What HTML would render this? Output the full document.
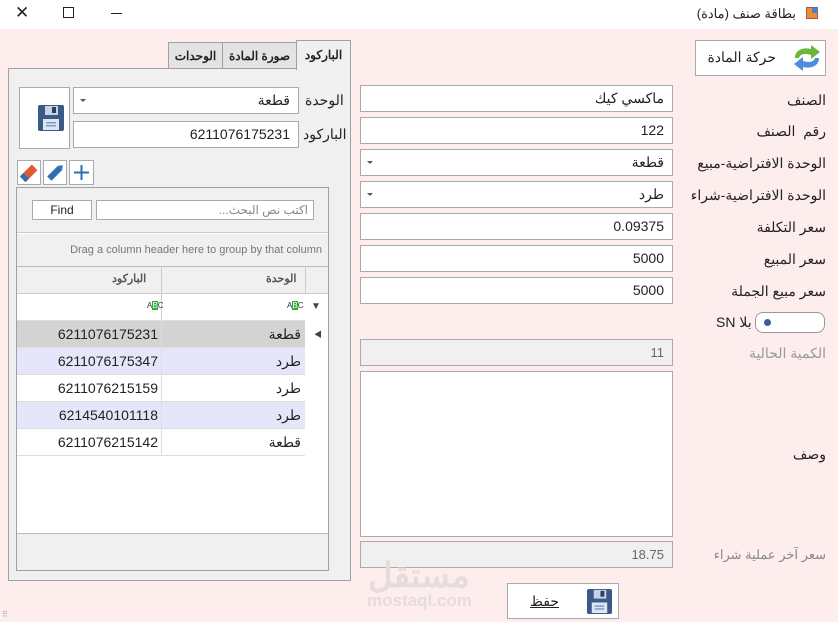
<!DOCTYPE html>
<html><head><meta charset="utf-8"><style>
*{box-sizing:border-box;margin:0;padding:0}
body{width:838px;height:622px;overflow:hidden;background:#fdeeed;font-family:"Liberation Sans","Noto Sans CJK SC",sans-serif;font-size:13px;color:#222;position:relative}
.a{position:absolute}
.inp{position:absolute;background:#fff;border:1px solid #aaa;text-align:right;padding-right:8px;font-size:14px;line-height:25px;height:27px;direction:ltr}
.lbl{position:absolute;right:12px;font-size:14px;text-align:right;white-space:nowrap;direction:rtl}
.dd{position:absolute;left:6px;top:11px;width:0;height:0;border-left:3px solid transparent;border-right:3px solid transparent;border-top:3px solid #555}
.row{position:absolute;left:17px;width:288px;height:27px;border-bottom:1px solid #ddd}
.row div{position:absolute;top:0;height:27px;line-height:27px;font-size:14px}
.c1{left:0;width:145px;text-align:right;padding-right:3px;border-right:1px solid #ddd}
.c2{left:145px;width:143px;text-align:right;padding-right:4px}
.btn{position:absolute;background:#fff;border:1px solid #aaa}
</style></head><body>
<div class="a" style="left:0;top:0;width:838px;height:29px;background:#fff"></div>
<div class="a" style="left:15px;top:3px;font-size:17px;color:#222">✕</div>
<div class="a" style="left:63px;top:7px;width:11px;height:11px;border:1px solid #222"></div>
<div class="a" style="left:111px;top:13px;width:11px;height:1px;background:#222"></div>
<div class="a" style="right:42px;top:6px;font-size:13px;direction:rtl">بطاقة صنف (مادة)</div>
<div class="a" style="left:806px;top:7px;width:12px;height:12px;background:#e89030;border:1px solid #a55"><div class="a" style="left:5px;top:0;width:6px;height:5px;background:#4a7fd0"></div></div>

<div class="a" style="left:8px;top:68px;width:343px;height:513px;background:#f0f0f0;border:1px solid #a0a0a0"></div>
<div class="a" style="left:168px;top:42px;width:55px;height:27px;background:#e3e3e3;border:1px solid #a0a0a0;text-align:center;line-height:26px;font-weight:bold;font-size:12px">الوحدات</div>
<div class="a" style="left:222px;top:42px;width:75px;height:27px;background:#e3e3e3;border:1px solid #a0a0a0;text-align:center;line-height:26px;font-weight:bold;font-size:12px">صورة المادة</div>
<div class="a" style="left:296px;top:40px;width:55px;height:30px;background:#f0f0f0;border:1px solid #a0a0a0;border-bottom:none;text-align:center;line-height:28px;font-weight:bold;font-size:12px">الباركود</div>

<div class="btn" style="left:19px;top:87px;width:51px;height:62px;border-color:#aaa"></div>
<svg class="a" style="left:37px;top:104px" width="28" height="28" viewBox="0 0 28 28"><rect x="1" y="1" width="26" height="26" rx="2" fill="#3b5a88"/><rect x="8" y="2" width="13" height="9" fill="#c8d4e4"/><rect x="15" y="3" width="4" height="6" fill="#2a3f66"/><rect x="6" y="15" width="16" height="11" fill="#dde6f2"/><rect x="9" y="18" width="10" height="1.5" fill="#7a9ac0"/><rect x="9" y="21" width="10" height="1.5" fill="#7a9ac0"/></svg>
<div class="inp" style="left:73px;top:87px;width:226px">قطعة<div class="dd"></div></div>
<div class="inp" style="left:73px;top:121px;width:226px">6211076175231</div>
<div class="a" style="left:305px;top:92px;font-size:14px">الوحدة</div>
<div class="a" style="left:303px;top:126px;font-size:14px">الباركود</div>

<div class="btn" style="left:17px;top:160px;width:24px;height:25px"><svg width="22" height="23"><g transform="rotate(-45 11 12)"><rect x="4" y="8" width="15" height="8" rx="1" fill="#e05a38"/><rect x="2" y="8" width="5" height="8" fill="#2f6db5"/></g></svg></div>
<div class="btn" style="left:43px;top:160px;width:24px;height:25px"><svg width="22" height="23"><g transform="rotate(-45 11 12)"><rect x="3" y="9" width="15" height="6" fill="#2f6db5"/><path d="M18 9 L22 12 L18 15Z" fill="#2f6db5"/></g></svg></div>
<div class="btn" style="left:69px;top:160px;width:25px;height:25px"><svg width="23" height="23"><path d="M11.5 4V19M4 11.5H19" stroke="#2f6db5" stroke-width="2"/></svg></div>

<div class="a" style="left:16px;top:187px;width:313px;height:384px;background:#fff;border:1px solid #a0a0a0"></div>
<div class="a" style="left:17px;top:188px;width:311px;height:45px;background:#f0f0f0;border-bottom:1px solid #ccc"></div>
<div class="btn" style="left:32px;top:200px;width:60px;height:20px;text-align:center;line-height:18px;font-size:12px">Find</div>
<div class="btn" style="left:96px;top:200px;width:218px;height:20px;text-align:right;padding-right:5px;line-height:18px;font-size:12px;color:#888;direction:rtl">اكتب نص البحث...</div>
<div class="a" style="left:17px;top:234px;width:311px;height:32px;background:#f0f0f0;text-align:right;padding-right:6px;line-height:32px;font-size:11px;color:#777">Drag a column header here to group by that column</div>
<div class="a" style="left:17px;top:266px;width:311px;height:28px;background:#f0f0f0;border-top:1px solid #bbb;border-bottom:1px solid #ccc"></div>
<div class="a" style="left:161px;top:266px;width:1px;height:189px;background:#ccc"></div>
<div class="a" style="left:305px;top:266px;width:1px;height:28px;background:#ccc"></div>
<div class="a" style="left:112px;top:272px;font-size:11px;color:#555;font-weight:bold">الباركود</div>
<div class="a" style="left:266px;top:272px;font-size:11px;color:#555;font-weight:bold">الوحدة</div>
<div class="a" style="left:147px;top:301px;font-size:8px;color:#333">A<span style="background:#3a3;color:#fff">B</span>C</div>
<div class="a" style="left:287px;top:301px;font-size:8px;color:#333">A<span style="background:#3a3;color:#fff">B</span>C</div>
<div class="a" style="left:311px;top:301px;font-size:10px;color:#444">▼</div>
<div class="a" style="left:17px;top:293px;width:288px;height:1px;background:#ccc"></div>
<div class="a" style="left:17px;top:320px;width:288px;height:1px;background:#ddd"></div>
<div class="row" style="top:321px;background:#d3d3d3"><div class="c1">6211076175231</div><div class="c2">قطعة</div></div>
<div class="a" style="left:314px;top:329px;font-size:8px;color:#444">◀</div>
<div class="row" style="top:348px;background:#e6e6fa"><div class="c1">6211076175347</div><div class="c2">طرد</div></div>
<div class="row" style="top:375px;background:#fff"><div class="c1">6211076215159</div><div class="c2">طرد</div></div>
<div class="row" style="top:402px;background:#e6e6fa"><div class="c1">6214540101118</div><div class="c2">طرد</div></div>
<div class="row" style="top:429px;background:#fff"><div class="c1">6211076215142</div><div class="c2">قطعة</div></div>
<div class="a" style="left:17px;top:533px;width:311px;height:37px;background:#f0f0f0;border-top:1px solid #bbb"></div>

<div class="btn" style="left:695px;top:40px;width:131px;height:36px"></div>
<div class="a" style="right:62px;top:49px;font-size:14px;direction:rtl">حركة المادة</div>
<svg class="a" style="left:791px;top:43px" width="32" height="30" viewBox="0 0 32 30"><path d="M4 15 C4 7 12 4 20 6 L20 2 L29 9 L20 16 L20 12 C14 10 9 11 8 15Z" fill="#6ab83a"/><path d="M28 15 C28 23 20 26 12 24 L12 28 L3 21 L12 14 L12 18 C18 20 23 19 24 15Z" fill="#4a8fd8"/></svg>

<div class="inp" style="left:360px;top:85px;width:313px">ماكسي كيك</div>
<div class="inp" style="left:360px;top:117px;width:313px">122</div>
<div class="inp" style="left:360px;top:149px;width:313px">قطعة<div class="dd"></div></div>
<div class="inp" style="left:360px;top:181px;width:313px">طرد<div class="dd"></div></div>
<div class="inp" style="left:360px;top:213px;width:313px">0.09375</div>
<div class="inp" style="left:360px;top:245px;width:313px">5000</div>
<div class="inp" style="left:360px;top:277px;width:313px">5000</div>
<div class="lbl" style="top:92px">الصنف</div>
<div class="lbl" style="top:123px">رقم &nbsp;الصنف</div>
<div class="lbl" style="top:155px">الوحدة الافتراضية-مبيع</div>
<div class="lbl" style="top:187px">الوحدة الافتراضية-شراء</div>
<div class="lbl" style="top:219px">سعر التكلفة</div>
<div class="lbl" style="top:251px">سعر المبيع</div>
<div class="lbl" style="top:283px">سعر مبيع الجملة</div>

<div class="a" style="left:755px;top:312px;width:70px;height:21px;background:#fff;border:1px solid #999;border-radius:8px"><div class="a" style="left:8px;top:6px;width:7px;height:7px;border-radius:50%;background:#3b5a99"></div></div>
<div class="a" style="left:716px;top:314px;font-size:14px">SN <span>بلا</span></div>

<div class="inp" style="left:360px;top:339px;width:313px;background:#f0f0f0;color:#666;font-size:13px">11</div>
<div class="lbl" style="top:345px;color:#999">الكمية الحالية</div>
<div class="inp" style="left:360px;top:371px;width:313px;height:166px"></div>
<div class="lbl" style="top:446px">وصف</div>
<div class="inp" style="left:360px;top:541px;width:313px;background:#f0f0f0;color:#666;font-size:13px">18.75</div>
<div class="lbl" style="top:547px;color:#888;font-size:13px">سعر آخر عملية شراء</div>

<div class="a" style="left:368px;top:556px;font-size:34px;font-weight:bold;color:#e6dcdb;direction:rtl">مستقل</div>
<div class="a" style="left:367px;top:591px;font-size:17px;font-weight:bold;color:#e6dcdb">mostaql.com</div>

<div class="btn" style="left:507px;top:583px;width:112px;height:36px"></div>
<div class="a" style="left:530px;top:593px;font-size:14px;text-decoration:underline">حفظ</div>
<svg class="a" style="left:586px;top:588px" width="27" height="27" viewBox="0 0 28 28"><rect x="1" y="1" width="26" height="26" rx="2" fill="#3b5a88"/><rect x="8" y="2" width="13" height="9" fill="#c8d4e4"/><rect x="15" y="3" width="4" height="6" fill="#2a3f66"/><rect x="6" y="15" width="16" height="11" fill="#dde6f2"/><rect x="9" y="18" width="10" height="1.5" fill="#7a9ac0"/><rect x="9" y="21" width="10" height="1.5" fill="#7a9ac0"/></svg>
<div class="a" style="left:2px;top:610px;font-size:8px;color:#999">⠿</div>
</body></html>
